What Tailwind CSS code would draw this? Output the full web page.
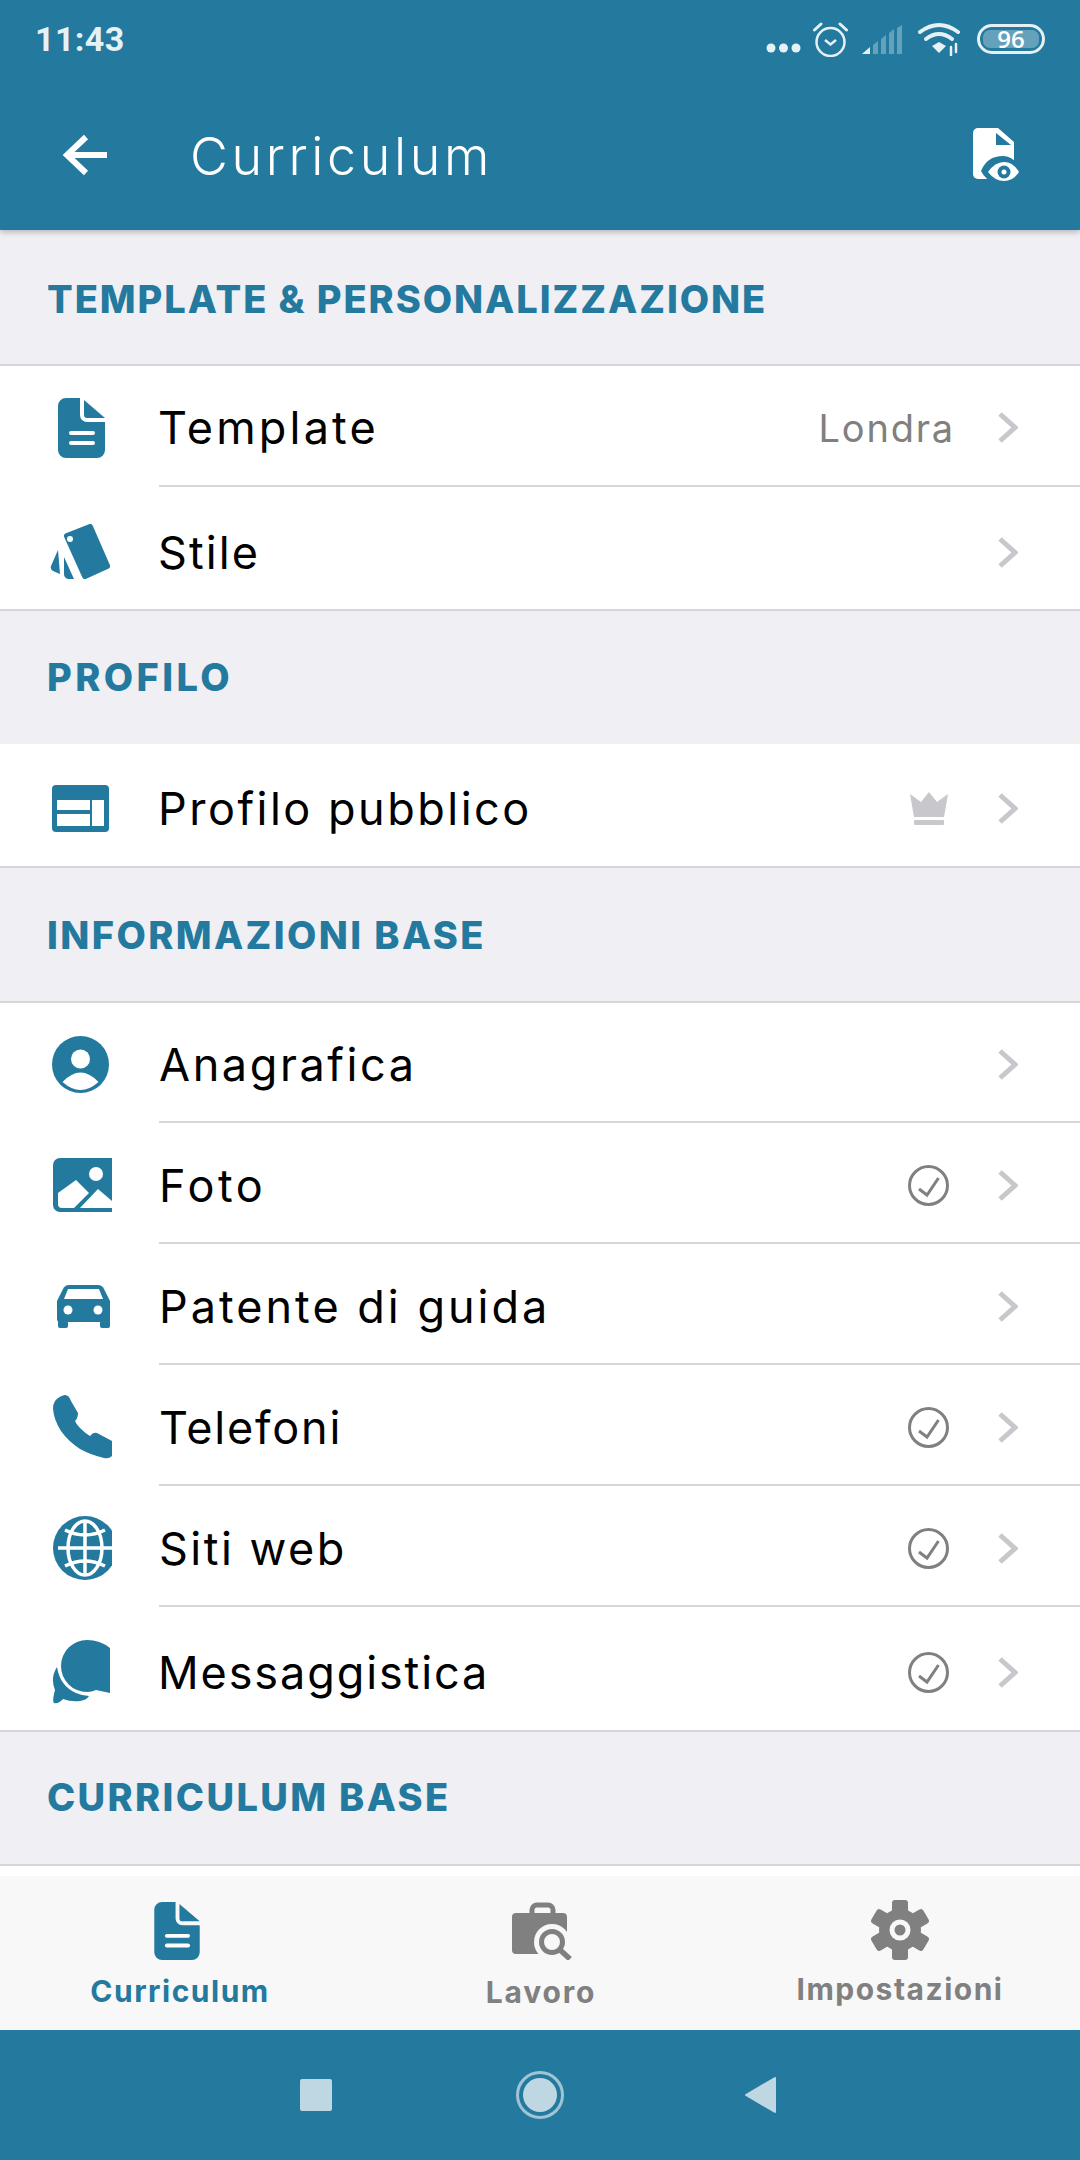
<!DOCTYPE html>
<html lang="it">
<head>
  <meta charset="UTF-8">
  <meta name="viewport" content="width=device-width, initial-scale=1.0">
  <title>Curriculum</title>
  <script src="https://cdn.jsdelivr.net/npm/@tailwindcss/browser@4"></script>
</head>
<body class="bg-white font-['Inter',sans-serif]">
  <div class="w-[1080px] h-[2160px] flex flex-col overflow-hidden">

    <!-- header -->
    <header class="relative z-10 h-[230px] shrink-0 bg-[#24799f] shadow-[0_2px_6px_rgba(0,0,0,0.25)]">
      <div class="h-[78px] pl-[35px] pr-[35px] flex items-center justify-between text-[#e6f1f6]">
        <span class="font-['Roboto',sans-serif] font-bold text-[34px] leading-none tracking-[0.4px]">11:43</span>
        <div class="flex items-center">
          <svg class="mt-[17px] mr-[12px]" width="35" height="10" viewBox="0 0 35 10" fill="#e6f1f6"><circle cx="5" cy="5" r="4.5"/><circle cx="17.5" cy="5" r="4.5"/><circle cx="30" cy="5" r="4.5"/></svg>
          <svg class="mr-[14px]" width="35" height="35" viewBox="0 0 35 35" fill="none" stroke="#e6f1f6"><circle cx="17.5" cy="20" r="14" stroke-width="2.5"/><path d="M12 18l5.5 4.5L23 18" stroke-width="2.5"/><path d="M1.5 8L8 2M33.500 8L27 2" stroke-width="3" stroke-linecap="round"/></svg>
          <svg class="mr-[16px]" width="40" height="29" viewBox="0 0 40 29"><path d="M0 29L8 22V29Z" fill="#e6f1f6"/><path d="M11 20L16 16V29H11ZM19 14L24 10V29H19ZM27 8L32 4V29H27ZM35 3L40 0V29H35Z" fill="#fff" fill-opacity="0.3"/></svg>
          <svg class="mr-[16px]" width="43" height="34" viewBox="0 0 43 34" fill="none" stroke="#e6f1f6" stroke-linecap="round"><path d="M2 10Q21-4 40 10" stroke-width="4"/><path d="M8 17Q21 7 34 17" stroke-width="4"/><path d="M14 24L21 20L28 24L21 31Z" fill="#e6f1f6" stroke="none"/><path d="M33 25V33M38 22V30" stroke-width="2.500"/></svg>
          <div class="w-[68px] h-[30px] rounded-full border-[3px] border-[#e6f1f6] p-[3px]">
            <div class="h-full rounded-[7px] bg-white/30 flex items-center justify-center text-[24px] leading-none font-semibold font-['Open_Sans',sans-serif] text-white">96</div>
          </div>
        </div>
      </div>
      <div class="h-[152px] flex items-start pt-[56px] pl-[62px] pr-[57px]">
        <svg width="45" height="42" viewBox="0 0 45 42" fill="none" stroke="#fff" stroke-width="6"><path d="M24 3L5 21L24 39"/><path d="M5 21H45"/></svg>
        <h1 class="ml-[83px] text-white font-light text-[52px] leading-none tracking-[3.600px] -mt-[3px]">Curriculum</h1>
        <svg class="ml-auto -mt-[6px]" width="50" height="55" viewBox="0 0 50 55"><path d="M5 0H25L41 14V51H5A5 5 0 0 1 0 46V5A5 5 0 0 1 5 0Z" fill="#fff"/><path d="M23 5L38 17H23Z" fill="#24799f"/><path d="M8 43Q14 28 30 28Q41 28 50 43Q40 58 28 56Q14 55 8 43Z" fill="#24799f"/><path d="M15 44Q22 34 31 34Q40 34 46 44Q40 53 31 53Q22 53 15 44Z" fill="#fff"/><circle cx="31" cy="44" r="6.500" fill="#24799f"/><circle cx="31" cy="44" r="2.500" fill="#fff"/></svg>
      </div>
    </header>

    <main class="flex-1 flex flex-col">
      <!-- template -->
      <div class="h-[136px] pt-[50px] pl-[47px] bg-[#efeff4] border-b-2 border-[#d6d6da] text-[#24799f] font-extrabold text-[38px] leading-none tracking-[1.950px]">TEMPLATE &amp; PERSONALIZZAZIONE</div>
      <div class="h-[121px] flex bg-white">
        <div class="w-[159px] flex items-center justify-center pl-[4px] pt-[3px]">
          <svg width="47" height="60" viewBox="0 0 47 60" fill="#24799f"><path d="M8 0H22V17A7 7 0 0 0 29 24H47V52A8 8 0 0 1 39 60H8A8 8 0 0 1 0 52V8A8 8 0 0 1 8 0Z"/><path d="M26 2L47 20H29A3 3 0 0 1 26 17Z"/><rect x="11" y="33" width="26" height="4" rx="2" fill="#fff"/><rect x="11" y="43" width="26" height="4" rx="2" fill="#fff"/></svg>
        </div>
        <div class="flex-1 flex items-center border-b-2 border-[#d6d6da] pt-[4px]">
          <span class="text-black text-[45px] leading-none tracking-[3.200px] -ml-[1px]">Template</span>
          <span class="ml-auto text-[#808080] text-[38px] leading-none tracking-[1.800px] mr-[43px]">Londra</span>
          <svg class="mr-[62px]" width="20" height="31" viewBox="0 0 20 31" fill="none" stroke="#c8c7cc" stroke-width="5"><path d="M2 2L17 15.500L2 29"/></svg>
        </div>
      </div>
      <div class="h-[124px] flex bg-white border-b-2 border-[#d6d6da]">
        <div class="w-[159px] flex items-center justify-center pt-[8px]">
          <svg width="60" height="56" viewBox="0 0 60 56" fill="#24799f"><path d="M17 12L40 3L57 42L35 52Z" stroke="#24799f" stroke-width="6" stroke-linejoin="round"/><circle cx="20" cy="15" r="3" fill="#fff"/><path d="M8 26L10 50L3 47Q0 45 1 42Z"/><path d="M14 33L24 55L18 55Q14 54 14 50Z"/></svg>
        </div>
        <div class="flex-1 flex items-center pt-[8px]">
          <span class="text-black text-[45px] leading-none tracking-[2.100px] -ml-[1px]">Stile</span>
          <svg class="ml-auto mr-[62px]" width="20" height="31" viewBox="0 0 20 31" fill="none" stroke="#c8c7cc" stroke-width="5"><path d="M2 2L17 15.500L2 29"/></svg>
        </div>
      </div>

      <!-- profilo -->
      <div class="h-[133px] pt-[47px] pl-[47px] bg-[#efeff4] text-[#24799f] font-extrabold text-[38px] leading-none tracking-[3.400px]">PROFILO</div>
      <div class="h-[124px] flex bg-white border-b-2 border-[#d6d6da]">
        <div class="w-[159px] flex items-center justify-center pl-[2px] pt-[6px]">
          <svg width="57" height="47" viewBox="0 0 57 47"><rect width="57" height="47" rx="4" fill="#24799f"/><rect x="5" y="15" width="33" height="10" fill="#fff"/><rect x="5" y="29" width="33" height="12" fill="#fff"/><rect x="40" y="15" width="12" height="26" fill="#fff"/></svg>
        </div>
        <div class="flex-1 flex items-center pt-[6px]">
          <span class="text-black text-[45px] leading-none tracking-[2.500px] -ml-[1px]">Profilo pubblico</span>
          <svg class="ml-auto mr-[50px]" width="38" height="33" viewBox="0 0 38 33" fill="#c8c7cc"><path d="M0 2L11 10L19 0L27 10L38 2L34 25H4Z"/><rect x="4" y="28" width="30" height="5" rx="1"/></svg>
          <svg class="mr-[62px]" width="20" height="31" viewBox="0 0 20 31" fill="none" stroke="#c8c7cc" stroke-width="5"><path d="M2 2L17 15.500L2 29"/></svg>
        </div>
      </div>

      <!-- informazioni base -->
      <div class="h-[135px] pt-[48px] pl-[47px] bg-[#efeff4] border-b-2 border-[#d6d6da] text-[#24799f] font-extrabold text-[38px] leading-none tracking-[2.400px]">INFORMAZIONI BASE</div>
      <div class="h-[120px] flex bg-white">
        <div class="w-[159px] flex items-center justify-center pl-[2px] pt-[2px]">
          <svg width="57" height="57" viewBox="0 0 57 57"><circle cx="28.500" cy="28.500" r="28.500" fill="#24799f"/><circle cx="28.500" cy="23" r="9.500" fill="#fff"/><path d="M10.500 46Q28.500 27 46.500 46Q28.500 62 10.500 46Z" fill="#fff"/></svg>
        </div>
        <div class="flex-1 flex items-center border-b-2 border-[#d6d6da] pt-[5px]">
          <span class="text-black text-[45px] leading-none tracking-[2.600px]">Anagrafica</span>
          <svg class="ml-auto mr-[62px]" width="20" height="31" viewBox="0 0 20 31" fill="none" stroke="#c8c7cc" stroke-width="5"><path d="M2 2L17 15.500L2 29"/></svg>
        </div>
      </div>
      <div class="h-[121px] flex bg-white">
        <div class="w-[159px] flex items-center justify-center pl-[6px] pt-[2px]">
          <svg width="59" height="54" viewBox="0 0 59 54"><path d="M7 0H59V54H7A7 7 0 0 1 0 47V7A7 7 0 0 1 7 0Z" fill="#24799f"/><circle cx="43" cy="16" r="7" fill="#fff"/><path d="M5 35L23 22L36 35L21 50H9Q5 50 5 46Z" fill="#fff"/><path d="M45 31L59 43V50H27Z" fill="#fff"/></svg>
        </div>
        <div class="flex-1 flex items-center border-b-2 border-[#d6d6da] pt-[6px]">
          <span class="text-black text-[45px] leading-none tracking-[3.600px]">Foto</span>
          <svg class="ml-auto mr-[49px]" width="41" height="41" viewBox="0 0 41 41" fill="none" stroke="#808080" stroke-width="3"><circle cx="20.500" cy="20.500" r="19"/><path d="M11 24L19 30L30.500 13"/></svg>
          <svg class="mr-[62px]" width="20" height="31" viewBox="0 0 20 31" fill="none" stroke="#c8c7cc" stroke-width="5"><path d="M2 2L17 15.500L2 29"/></svg>
        </div>
      </div>
      <div class="h-[121px] flex bg-white">
        <div class="w-[159px] flex items-center justify-center pl-[8px] pt-[2px]">
          <svg width="53" height="44" viewBox="0 0 53 44" fill="#24799f"><path d="M12 1H41Q45 1 47 5L53 17V35Q53 38 50 38H3Q0 38 0 35V17L6 5Q8 1 12 1Z"/><rect x="1" y="34" width="10" height="10" rx="2"/><rect x="43" y="34" width="10" height="10" rx="2"/><path d="M11 5H42L46 15H7Z" fill="#fff"/><circle cx="11" cy="26" r="4.500" fill="#fff"/><circle cx="41" cy="26" r="4.500" fill="#fff"/></svg>
        </div>
        <div class="flex-1 flex items-center border-b-2 border-[#d6d6da] pt-[6px]">
          <span class="text-black text-[45px] leading-none tracking-[3px]">Patente di guida</span>
          <svg class="ml-auto mr-[62px]" width="20" height="31" viewBox="0 0 20 31" fill="none" stroke="#c8c7cc" stroke-width="5"><path d="M2 2L17 15.500L2 29"/></svg>
        </div>
      </div>
      <div class="h-[121px] flex bg-white">
        <div class="w-[159px] flex items-center justify-center pl-[6px] pt-[2px]">
          <svg width="59" height="64" viewBox="0 0 59 64" fill="#24799f"><path d="M2 6Q6 1 12 0Q16 0 18 6L25 18Q25 23 22 26Q23 29 27 33Q32 38 37 41Q40 37 44 38L59 46V61Q56 64 51 63Q38 60 27 54Q15 46 8 36Q1 25 0 14Q0 9 2 6Z"/></svg>
        </div>
        <div class="flex-1 flex items-center border-b-2 border-[#d6d6da] pt-[6px]">
          <span class="text-black text-[45px] leading-none tracking-[1.800px]">Telefoni</span>
          <svg class="ml-auto mr-[49px]" width="41" height="41" viewBox="0 0 41 41" fill="none" stroke="#808080" stroke-width="3"><circle cx="20.500" cy="20.500" r="19"/><path d="M11 24L19 30L30.500 13"/></svg>
          <svg class="mr-[62px]" width="20" height="31" viewBox="0 0 20 31" fill="none" stroke="#c8c7cc" stroke-width="5"><path d="M2 2L17 15.500L2 29"/></svg>
        </div>
      </div>
      <div class="h-[121px] flex bg-white">
        <div class="w-[159px] flex items-center justify-center pl-[6px] pt-[2px]">
          <svg width="59" height="64" viewBox="0 0 59 64" fill="none"><circle cx="32" cy="32" r="32" fill="#24799f"/><g stroke="#fff" stroke-width="3.500"><path d="M5 32H59M32 5V59"/><ellipse cx="32" cy="32" rx="17" ry="27"/><path d="M12 14Q32 24 52 14M12 50Q32 40 52 50"/></g></svg>
        </div>
        <div class="flex-1 flex items-center border-b-2 border-[#d6d6da] pt-[6px]">
          <span class="text-black text-[45px] leading-none tracking-[2.500px]">Siti web</span>
          <svg class="ml-auto mr-[49px]" width="41" height="41" viewBox="0 0 41 41" fill="none" stroke="#808080" stroke-width="3"><circle cx="20.500" cy="20.500" r="19"/><path d="M11 24L19 30L30.500 13"/></svg>
          <svg class="mr-[62px]" width="20" height="31" viewBox="0 0 20 31" fill="none" stroke="#c8c7cc" stroke-width="5"><path d="M2 2L17 15.500L2 29"/></svg>
        </div>
      </div>
      <div class="h-[125px] flex bg-white border-b-2 border-[#d6d6da]">
        <div class="w-[159px] flex items-center justify-center pt-[6px] pl-[2px]">
          <svg width="59" height="64" viewBox="0 0 59 64" fill="#24799f"><path d="M36 0A26 26 0 0 0 10 26A26 26 0 0 0 36 52Q41 52 45 50L59 53V8Q49 0 36 0Z"/><path d="M6 27Q9 46 25 53Q32 56 38 56Q36 60 29 61Q20 62 12 59Q8 64 3 63Q1 61 4 50Q-1 38 6 27Z"/></svg>
        </div>
        <div class="flex-1 flex items-center pt-[7px]">
          <span class="text-black text-[45px] leading-none tracking-[1.900px] -ml-[1px]">Messaggistica</span>
          <svg class="ml-auto mr-[49px]" width="41" height="41" viewBox="0 0 41 41" fill="none" stroke="#808080" stroke-width="3"><circle cx="20.500" cy="20.500" r="19"/><path d="M11 24L19 30L30.500 13"/></svg>
          <svg class="mr-[62px]" width="20" height="31" viewBox="0 0 20 31" fill="none" stroke="#c8c7cc" stroke-width="5"><path d="M2 2L17 15.500L2 29"/></svg>
        </div>
      </div>

      <!-- curriculum base -->
      <div class="h-[134px] pt-[46px] pl-[47px] bg-[#efeff4] border-b-2 border-[#d6d6da] text-[#24799f] font-extrabold text-[38px] leading-none tracking-[2.350px]">CURRICULUM BASE</div>
      <div class="flex-1 bg-white"></div>
    </main>

    <!-- bottom tabs -->
    <nav class="h-[154px] shrink-0 bg-[#f8f8f8] grid grid-cols-3 font-bold text-[30px] leading-none text-[#808080] tracking-[1.500px]">
      <div class="flex flex-col items-center pt-[26px] text-[#24799f]">
        <svg class="-ml-[6px]" width="46" height="58" viewBox="0 0 47 60" fill="#24799f"><path d="M8 0H22V17A7 7 0 0 0 29 24H47V52A8 8 0 0 1 39 60H8A8 8 0 0 1 0 52V8A8 8 0 0 1 8 0Z"/><path d="M26 2L47 20H29A3 3 0 0 1 26 17Z"/><rect x="11" y="33" width="26" height="4" rx="2" fill="#fff"/><rect x="11" y="43" width="26" height="4" rx="2" fill="#fff"/></svg>
        <span class="mt-[16px]">Curriculum</span>
      </div>
      <div class="flex flex-col items-center pt-[26px]">
        <svg class="ml-[3px]" width="60" height="58" viewBox="0 0 60 58"><rect x="0" y="11" width="55" height="41" rx="4" fill="#808080"/><rect x="20" y="3" width="21" height="16" rx="5" fill="none" stroke="#808080" stroke-width="5"/><circle cx="40" cy="40" r="18" fill="#f8f8f8"/><circle cx="40" cy="40" r="10.500" fill="none" stroke="#808080" stroke-width="5"/><path d="M47 47L58 57" stroke="#808080" stroke-width="5.500"/></svg>
        <span class="mt-[17px] tracking-[1.800px] ml-[2px]">Lavoro</span>
      </div>
      <div class="flex flex-col items-center pt-[24px]">
        <svg width="58" height="60" viewBox="0 0 58 60" fill="#808080"><circle cx="29" cy="30" r="21"/><rect x="21" y="0" width="16" height="16" rx="3"/><rect x="21" y="44" width="16" height="16" rx="3"/><rect x="21" y="0" width="16" height="16" rx="3" transform="rotate(60 29 30)"/><rect x="21" y="44" width="16" height="16" rx="3" transform="rotate(60 29 30)"/><rect x="21" y="0" width="16" height="16" rx="3" transform="rotate(-60 29 30)"/><rect x="21" y="44" width="16" height="16" rx="3" transform="rotate(-60 29 30)"/><circle cx="29" cy="30" r="10.500" fill="#f8f8f8"/><circle cx="29" cy="30" r="5.500"/></svg>
        <span class="mt-[14px]">Impostazioni</span>
      </div>
    </nav>

    <!-- system nav -->
    <div class="h-[130px] shrink-0 bg-[#24799f] flex items-start pt-[41px] pl-[300px]">
      <div class="w-[32px] h-[32px] mt-[8px] rounded-[2px] bg-[#bfd7e3]"></div>
      <div class="ml-[184px] w-[48px] h-[48px] rounded-full border-[3px] border-[#9fc4d5] p-[4px]"><div class="w-full h-full rounded-full bg-[#bfd7e3]"></div></div>
      <svg class="ml-[181px] mt-[6px]" width="32" height="36" viewBox="0 0 32 36" fill="#bfd7e3"><path d="M1 18L30 1V35Z" stroke="#bfd7e3" stroke-width="2" stroke-linejoin="round"/></svg>
    </div>
  </div>
</body>
</html>
